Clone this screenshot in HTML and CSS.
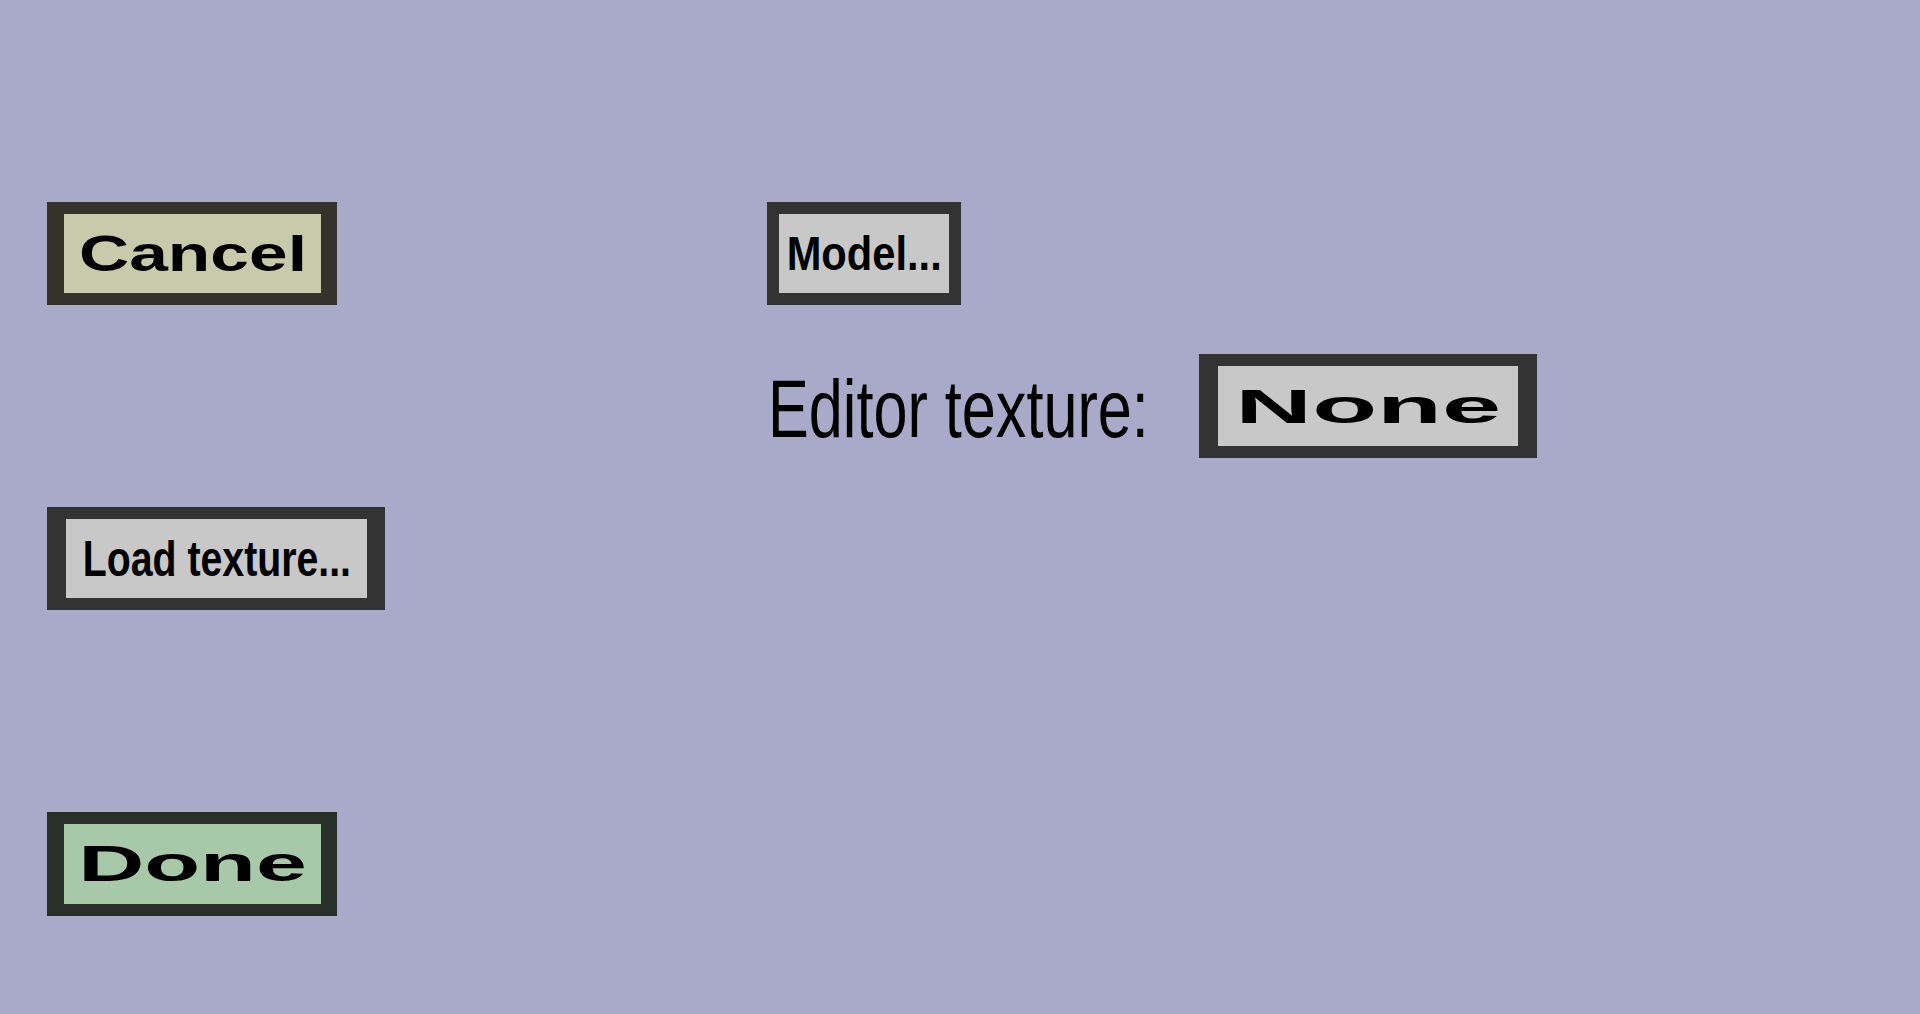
FILE: index.html
```html
<!DOCTYPE html>
<html>
<head>
<meta charset="utf-8">
<link rel="stylesheet" href="styles.css">
</head>
<body>
<div class="screen">
  <div class="col-left">
    <div class="btn btn-cancel"><span class="lbl s-cancel">Cancel</span></div>
    <div class="btn btn-load"><span class="lbl s-load">Load texture...</span></div>
    <div class="btn btn-done"><span class="lbl s-done">Done</span></div>
  </div>
  <div class="col-right">
    <div class="btn btn-model"><span class="lbl s-model">Model...</span></div>
    <div class="row">
      <div class="label"><span class="label-text">Editor texture:</span></div>
      <div class="btn btn-none"><span class="lbl s-none">None</span></div>
    </div>
  </div>
</div>
</body>
</html>
```

FILE: styles.css
```css
html, body {
  margin: 0;
  padding: 0;
  width: 1920px;
  height: 1014px;
  overflow: hidden;
  background: #a9a9c9;
  font-family: "Liberation Sans", Arial, sans-serif;
}

.screen {
  display: flex;
  padding: 202px 0 0 47px;
}

.col-left {
  display: flex;
  flex-direction: column;
  gap: 202px;
  width: 720px;
}

.col-right {
  display: flex;
  flex-direction: column;
  gap: 49px;
}

.row {
  display: flex;
  align-items: center;
}

.btn {
  box-sizing: border-box;
  display: flex;
  align-items: center;
  justify-content: center;
  height: 103px;
  border-style: solid;
  border-color: #333333;
  background: #c8c8c8;
  overflow: hidden;
}

.lbl {
  display: inline-block;
  font-weight: bold;
  font-size: 50px;
  line-height: 1;
  color: #000;
  white-space: nowrap;
  transform-origin: center;
}

.btn-cancel {
  width: 290px;
  border-width: 12px 16px 12px 17px;
  background: #c8caac;
  border-color: #33332b;
}
.s-cancel { transform: scaleX(1.39); }

.btn-load {
  width: 338px;
  border-width: 12px 18px 12px 19px;
}
.s-load { transform: scaleX(0.785); }

.btn-done {
  width: 290px;
  height: 104px;
  border-width: 12px 16px 12px 17px;
  background: #a8c9a9;
  border-color: #283029;
}
.s-done { transform: scaleX(1.83); }

.btn-model {
  width: 194px;
  border-width: 12px;
}
.s-model { font-size: 49px; transform: scaleX(0.85); }

.btn-none {
  width: 338px;
  height: 104px;
  border-width: 12px 19px;
}
.s-none { font-size: 49px; transform: scaleX(2.17); }

.label {
  width: 432px;
  height: 104px;
  display: flex;
  align-items: center;
}

.label-text {
  display: inline-block;
  margin-top: 6px;
  margin-left: 1px;
  font-size: 82px;
  line-height: 1;
  color: #000;
  white-space: nowrap;
  transform: scaleX(0.746);
  transform-origin: left center;
}
```
